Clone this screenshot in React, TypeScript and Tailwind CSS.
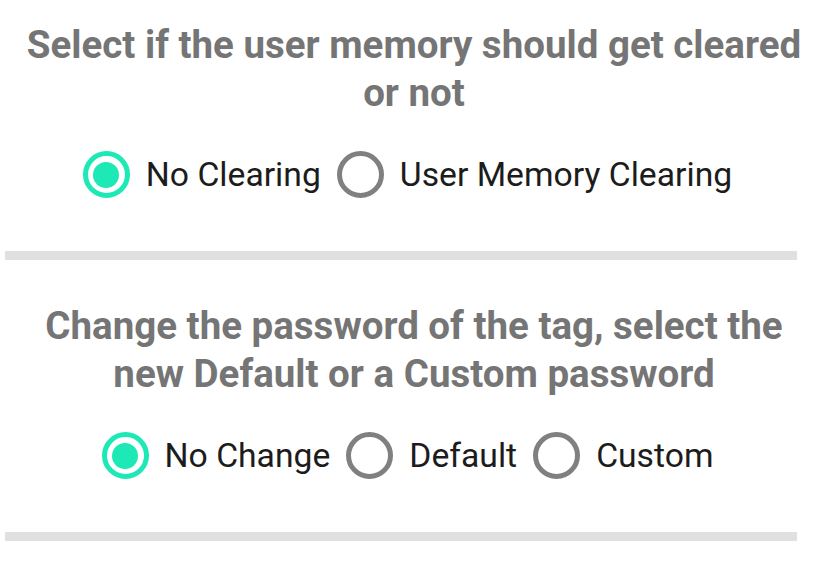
import { useState } from 'react';

type Option = { value: string; label: string };

function Radio({ checked, label, onSelect }: { checked: boolean; label: string; onSelect: () => void }) {
  return (
    <button type="button" onClick={onSelect} className="flex items-center gap-[16px] pr-[13px]">
      <span
        className={
          checked
            ? 'flex h-[47px] w-[47px] items-center justify-center rounded-full border-[5px] border-[#1de9b6]'
            : 'flex h-[47px] w-[47px] items-center justify-center rounded-full border-[5px] border-[#808080]'
        }
      >
        {checked && <span className="h-[26px] w-[26px] rounded-full bg-[#1de9b6]" />}
      </span>
      <span className="text-[33.7px] leading-[40px] text-[#1c1c1c]">{label}</span>
    </button>
  );
}

function Section({
  title,
  options,
  value,
  onChange,
  top,
}: {
  title: string;
  options: Option[];
  value: string;
  onChange: (v: string) => void;
  top: string;
}) {
  return (
    <div className={`flex flex-col items-center ${top}`}>
      <h2 className="px-[20px] text-center text-[38.5px] font-bold leading-[48px] text-[#757575]">{title}</h2>
      <div className="mt-[34px] flex items-center gap-[3px]">
        {options.map((o) => (
          <Radio key={o.value} checked={value === o.value} label={o.label} onSelect={() => onChange(o.value)} />
        ))}
      </div>
      <div className="ml-[5px] mt-[53px] h-[9px] w-[792px] self-start bg-[#e0e0e0]" />
    </div>
  );
}

export default function App() {
  const [clearing, setClearing] = useState('none');
  const [password, setPassword] = useState('nochange');

  return (
    <div className="min-h-[566px] w-[828px] bg-white font-['Roboto',sans-serif]">
      <Section
        top="pt-[21px]"
        title="Select if the user memory should get cleared or not"
        options={[
          { value: 'none', label: 'No Clearing' },
          { value: 'clear', label: 'User Memory Clearing' },
        ]}
        value={clearing}
        onChange={setClearing}
      />
      <Section
        top="pt-[42px]"
        title="Change the password of the tag, select the new Default or a Custom password"
        options={[
          { value: 'nochange', label: 'No Change' },
          { value: 'default', label: 'Default' },
          { value: 'custom', label: 'Custom' },
        ]}
        value={password}
        onChange={setPassword}
      />
    </div>
  );
}
